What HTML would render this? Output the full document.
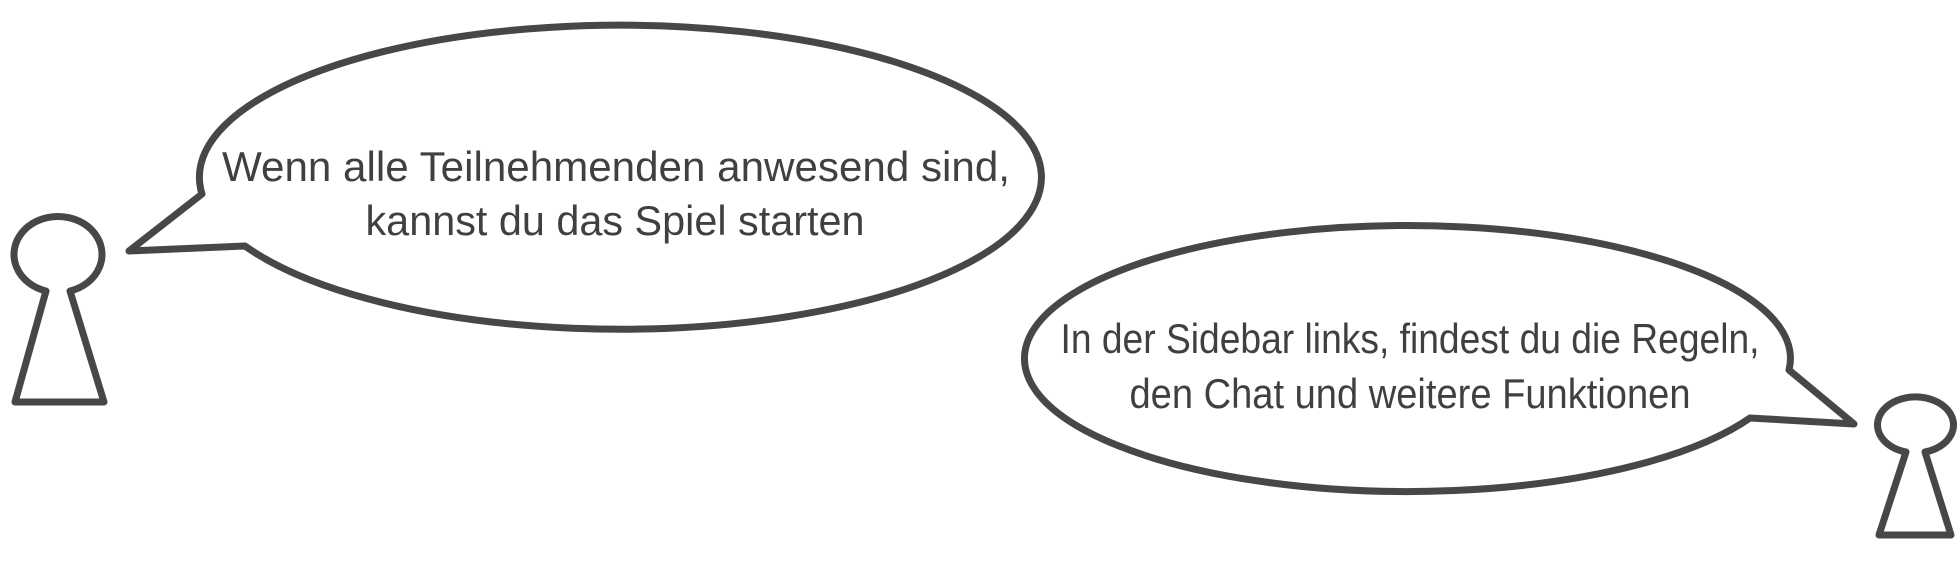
<!DOCTYPE html>
<html><head><meta charset="utf-8"><style>html,body{margin:0;padding:0;background:#fff}svg{display:block}</style></head>
<body>
<svg width="1960" height="563" viewBox="0 0 1960 563" xmlns="http://www.w3.org/2000/svg">
<g fill="#fff" stroke="#474747" stroke-width="7" stroke-linejoin="round">
<path d="M202,194 A421,152 0 1,1 245,246 L129,251 Z"/>
<path d="M1789,370 A383,133 0 1,0 1750,418 L1854,424 Z"/>
<path d="M46,291 A44,38 0 1,1 70,291 L104,402 L15,402 Z"/>
<path d="M1906,452 A38,28 0 1,1 1925,452 L1951,535 L1879,535 Z"/>
</g>
<g font-family="Liberation Sans, sans-serif" font-size="42" fill="#404040" text-anchor="middle">
<text x="616" y="181" textLength="788" lengthAdjust="spacingAndGlyphs">Wenn alle Teilnehmenden anwesend sind,</text>
<text x="615" y="235" textLength="499" lengthAdjust="spacingAndGlyphs">kannst du das Spiel starten</text>
<text x="1410" y="353" textLength="699" lengthAdjust="spacingAndGlyphs">In der Sidebar links, findest du die Regeln,</text>
<text x="1410" y="408" textLength="561" lengthAdjust="spacingAndGlyphs">den Chat und weitere Funktionen</text>
</g>
</svg>
</body></html>
